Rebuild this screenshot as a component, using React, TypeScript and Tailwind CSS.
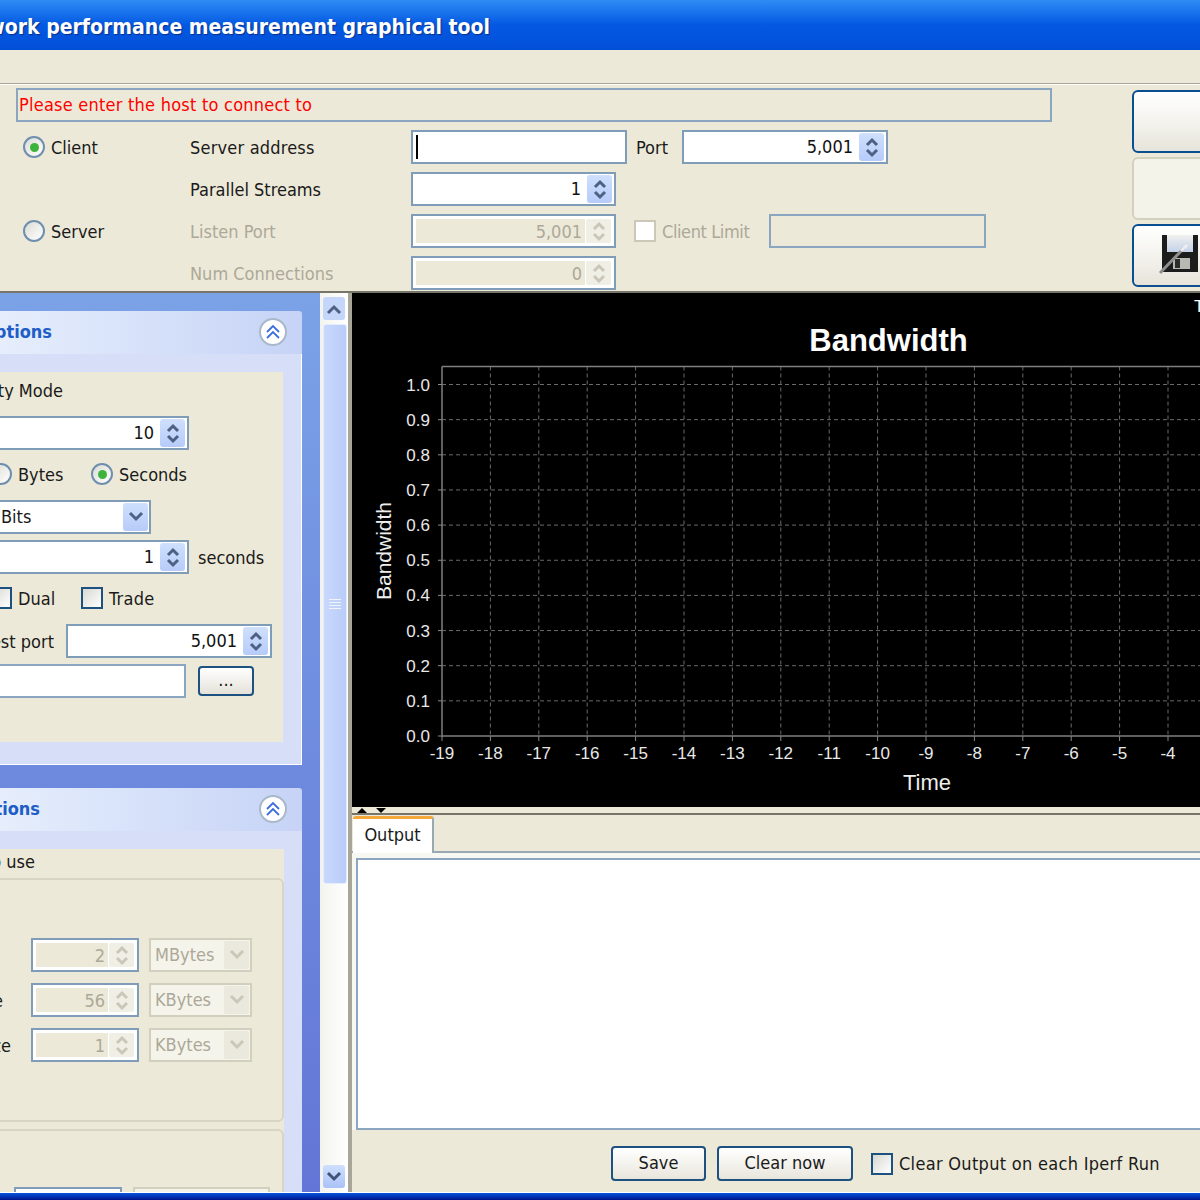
import type { ReactNode } from 'react';

const yLabels = ['1.0', '0.9', '0.8', '0.7', '0.6', '0.5', '0.4', '0.3', '0.2', '0.1', '0.0'];
const xLabels = [-19, -18, -17, -16, -15, -14, -13, -12, -11, -10, -9, -8, -7, -6, -5, -4, -3];

function Chevrons({ color }: { color: string }) {
  return (
    <svg width="14" height="24" viewBox="0 0 14 24" fill="none" stroke={color} strokeWidth="3">
      <polyline points="2,10 7,5 12,10" />
      <polyline points="2,15 7,20 12,15" />
    </svg>
  );
}

function ChevronDown({ color }: { color: string }) {
  return (
    <svg width="16" height="12" viewBox="0 0 16 12" fill="none" stroke={color} strokeWidth="3">
      <polyline points="2,2 8,8 14,2" />
    </svg>
  );
}

function Spinner({ value, className, disabled }: { value: string; className: string; disabled?: boolean }) {
  if (disabled) {
    return (
      <div className={`h-[34px] shrink-0 border-2 border-[#7f9db9] bg-white p-[3px] flex ${className}`}>
        <div className="flex-1 bg-[#ece9d8] text-[#aca899] text-right pr-[3px] leading-[26px]">{value}</div>
        <div className="w-[25px] ml-[1px] rounded-[2px] bg-[#f0efe6] flex items-center justify-center">
          <Chevrons color="#cac7b8" />
        </div>
      </div>
    );
  }
  return (
    <div className={`h-[34px] shrink-0 border-2 border-[#7f9db9] bg-white pl-[3px] pr-[2px] py-[1px] flex ${className}`}>
      <div className="flex-1 text-right pr-[6px] leading-[28px] text-[#111]">{value}</div>
      <div className="w-[25px] rounded-[3px] bg-gradient-to-b from-[#cfe0fd] to-[#b6cbf9] flex items-center justify-center">
        <Chevrons color="#4d6185" />
      </div>
    </div>
  );
}

function DisabledCombo({ value }: { value: string }) {
  return (
    <div className="ml-[10px] w-[103px] h-[34px] shrink-0 border-2 border-[#d2cfbe] bg-[#f5f4ea] pl-[4px] pr-[1px] py-[1px] flex">
      <div className="flex-1 text-[#aca899] leading-[28px]">{value}</div>
      <div className="w-[25px] rounded-[2px] bg-[#ebe9de] flex items-center justify-center">
        <ChevronDown color="#cac7b8" />
      </div>
    </div>
  );
}

function Radio({ checked }: { checked?: boolean }) {
  return (
    <div className="w-[22px] h-[22px] shrink-0 rounded-full border-2 border-[#6f8fae] bg-gradient-to-br from-[#dcdcd5] to-white flex items-center justify-center">
      {checked && <div className="w-[9px] h-[9px] rounded-full bg-[#3cb43c]" />}
    </div>
  );
}

function Checkbox({ disabled }: { disabled?: boolean }) {
  return disabled ? (
    <div className="w-[22px] h-[22px] shrink-0 border-2 border-[#cbc8b8] bg-white" />
  ) : (
    <div className="w-[22px] h-[22px] shrink-0 border-2 border-[#1c5180] bg-gradient-to-br from-[#d8d8d2] to-white" />
  );
}

// label cut off by the left edge of the window: right edge stays where the box ends
function ClippedLabel({ className, children }: { className: string; children: ReactNode }) {
  return <div className={`shrink-0 flex justify-end overflow-hidden whitespace-nowrap ${className}`}>{children}</div>;
}

function CollapseToggle() {
  return (
    <div className="w-[28px] h-[28px] rounded-full border-2 border-[#a9b8c9] bg-white flex items-center justify-center">
      <svg width="16" height="16" viewBox="0 0 16 16" fill="none" stroke="#3b6fe0" strokeWidth="1.8">
        <polyline points="2,8 8,2 14,8" />
        <polyline points="2,14 8,8 14,14" />
      </svg>
    </div>
  );
}

function SectionHeader({ title, width }: { title: string; width: string }) {
  return (
    <div className="h-[43px] rounded-tr-[3px] bg-gradient-to-r from-[#e6eefc] to-[#c6d3f6] flex items-center pr-[15px] pb-[2px]">
      <ClippedLabel className={`font-bold text-[#215dc6] ${width}`}>{title}</ClippedLabel>
      <div className="ml-auto">
        <CollapseToggle />
      </div>
    </div>
  );
}

function Scrollbar() {
  return (
    <div className="w-[32px] h-[899px] shrink-0 bg-gradient-to-r from-[#f3f3ee] to-white border-r-[4px] border-[#a8a698] pl-[3px] pr-[1px] pt-[4px] pb-[4px] flex flex-col">
      <div className="h-[23px] w-[22px] rounded-[3px] bg-[#c5d6fb] flex items-center justify-center">
        <svg width="16" height="12" viewBox="0 0 16 12" fill="none" stroke="#4d6185" strokeWidth="3">
          <polyline points="2,10 8,4 14,10" />
        </svg>
      </div>
      <div className="mt-[4px] h-[560px] w-[24px] rounded-[3px] border border-[#e4ecfd] bg-gradient-to-r from-[#c9d8fc] to-[#b9cdf9] flex flex-col items-center justify-center gap-[2px]">
        <div className="w-[12px] h-[1px] bg-[#eef3fe]" />
        <div className="w-[12px] h-[1px] bg-[#eef3fe]" />
        <div className="w-[12px] h-[1px] bg-[#eef3fe]" />
        <div className="w-[12px] h-[1px] bg-[#eef3fe]" />
      </div>
      <div className="mt-auto h-[23px] w-[22px] rounded-[3px] bg-gradient-to-b from-[#cfe0fd] to-[#aac2f7] flex items-center justify-center">
        <ChevronDown color="#3f5378" />
      </div>
    </div>
  );
}

function Chart() {
  const plotLeft = 442;
  const plotTop = 366.5;
  const yFor = (i: number) => 384.5 + i * 35.15;
  const xFor = (i: number) => plotLeft + i * 48.4;
  return (
    <svg className="block w-[848px] h-[514px] shrink-0 bg-black" viewBox="352 293 848 514" fontFamily="'Liberation Sans', Arial, sans-serif">
      <text x="888.5" y="351" fill="#fff" fontSize="31" fontWeight="700" textAnchor="middle">
        Bandwidth
      </text>
      <text x="1194" y="312" fill="#fff" fontSize="17">
        T
      </text>
      {yLabels.map((label, i) => (
        <g key={label}>
          {i < 10 && <line x1={plotLeft} x2="1200" y1={yFor(i)} y2={yFor(i)} stroke="#6a6a6a" strokeDasharray="4 3" />}
          <line x1={plotLeft - 4} x2={plotLeft} y1={yFor(i)} y2={yFor(i)} stroke="#8a8a8a" />
          <text x="430" y={yFor(i) + 6} fill="#e8e8e8" fontSize="17" textAnchor="end">
            {label}
          </text>
        </g>
      ))}
      {xLabels.map((label, i) => (
        <g key={label}>
          {i > 0 && <line x1={xFor(i)} x2={xFor(i)} y1={plotTop} y2="736" stroke="#6a6a6a" strokeDasharray="4 3" />}
          <line x1={xFor(i)} x2={xFor(i)} y1="736" y2="741" stroke="#8a8a8a" />
          <text x={xFor(i)} y="759" fill="#e8e8e8" fontSize="17" textAnchor="middle">
            {label}
          </text>
        </g>
      ))}
      <line x1={plotLeft} x2="1200" y1={plotTop} y2={plotTop} stroke="#7f7f7f" strokeWidth="1.5" />
      <line x1={plotLeft} x2={plotLeft} y1={plotTop} y2="737" stroke="#7f7f7f" strokeWidth="1.5" />
      <line x1={plotLeft} x2="1200" y1="736" y2="736" stroke="#7f7f7f" strokeWidth="1.5" />
      <text x="927" y="790" fill="#eee" fontSize="22" textAnchor="middle">
        Time
      </text>
      <text transform="translate(391 551) rotate(-90)" fill="#eee" fontSize="21" textAnchor="middle">
        Bandwidth
      </text>
    </svg>
  );
}

function FloppyIcon() {
  return (
    <svg width="40" height="40" viewBox="0 0 40 40" className="block">
      <defs>
        <linearGradient id="floppyLabel" x1="0" y1="0" x2="0" y2="1">
          <stop offset="0" stopColor="#f0f0ee" />
          <stop offset="1" stopColor="#c4d2ea" />
        </linearGradient>
      </defs>
      <path d="M4 0h36v37H4z" fill="#1c1c1c" />
      <rect x="9" y="0" width="26" height="17" fill="url(#floppyLabel)" />
      <rect x="15" y="23" width="17" height="11" fill="#b9b9b4" />
      <rect x="17" y="24" width="5" height="9" fill="#2c2c2c" />
      <line x1="2" y1="38" x2="26" y2="13" stroke="#8f8f8f" strokeWidth="3" />
      <line x1="23" y1="16" x2="29" y2="10" stroke="#eeeeee" strokeWidth="3" />
    </svg>
  );
}

export default function App() {
  return (
    <div className="w-[1200px] h-[1200px] overflow-hidden flex flex-col bg-[#ece9d8] text-[18px] text-[#1a1a1a] font-['DejaVu_Sans','Noto_Sans',sans-serif] [font-stretch:condensed]">
      {/* title bar */}
      <div className="h-[50px] shrink-0 pt-[5px] bg-gradient-to-b from-[#2f8cf5] via-[#0458e2] to-[#0350d8] flex items-center">
        <ClippedLabel className="w-[490px] text-[21px] font-bold text-white leading-none [text-shadow:1px_1px_1px_#0b2f8a]">
          JPerf 2.0.2 - network performance measurement graphical tool
        </ClippedLabel>
      </div>
      <div className="h-[33px] shrink-0" />
      <div className="h-[2px] shrink-0 bg-[#aca899] border-b border-white" />

      {/* connection settings */}
      <div className="h-[208px] shrink-0 flex border-b-2 border-[#77756a]">
        <div className="w-[1132px] shrink-0 pt-[3px]">
          <div className="ml-[16px] w-[1036px] h-[34px] border-2 border-[#8ba6c1] pl-[1px] leading-[30px] tracking-[0.23px] text-[#ff0000]">
            Please enter the host to connect to
          </div>
          <div className="mt-[8px] ml-[23px] flex flex-col gap-[8px]">
            <div className="h-[34px] flex items-center">
              <div className="w-[167px] flex items-center gap-[6px]">
                <Radio checked />
                <span>Client</span>
              </div>
              <div className="w-[221px] tracking-[0.2px]">Server address</div>
              <div className="w-[216px] h-[34px] border-2 border-[#7f9db9] bg-white pl-[3px] flex items-center">
                <div className="w-[2px] h-[24px] bg-black" />
              </div>
              <div className="ml-[9px] w-[46px]">Port</div>
              <Spinner value="5,001" className="w-[206px]" />
            </div>
            <div className="h-[34px] flex items-center">
              <div className="w-[167px]" />
              <div className="w-[221px]">Parallel Streams</div>
              <Spinner value="1" className="w-[205px]" />
            </div>
            <div className="h-[34px] flex items-center">
              <div className="w-[167px] flex items-center gap-[6px]">
                <Radio />
                <span>Server</span>
              </div>
              <div className="w-[221px] text-[#aca899]">Listen Port</div>
              <Spinner value="5,001" className="w-[205px]" disabled />
              <div className="ml-[18px]">
                <Checkbox disabled />
              </div>
              <div className="ml-[6px] w-[107px] text-[#aca899] tracking-[-0.4px]">Client Limit</div>
              <div className="w-[217px] h-[34px] border-2 border-[#8ba6c1]" />
            </div>
            <div className="h-[34px] flex items-center">
              <div className="w-[167px]" />
              <div className="w-[221px] text-[#aca899]">Num Connections</div>
              <Spinner value="0" className="w-[205px]" disabled />
            </div>
          </div>
        </div>
        <div className="flex-1 pt-[5px] flex flex-col gap-[4px] overflow-hidden">
          <div className="w-[90px] h-[63px] rounded-l-[6px] border-2 border-[#0a4f92] bg-gradient-to-b from-white via-[#f4f3ee] to-[#e6e4da]" />
          <div className="w-[90px] h-[63px] rounded-l-[6px] border-2 border-[#d3d0bf] bg-[#f4f3ea]" />
          <div className="w-[90px] h-[63px] rounded-l-[6px] border-2 border-[#0a4f92] bg-gradient-to-b from-white via-[#f4f3ee] to-[#e6e4da] pl-[24px] pt-[9px]">
            <FloppyIcon />
          </div>
        </div>
      </div>

      {/* main area */}
      <div className="h-[899px] shrink-0 flex overflow-hidden">
        <div className="w-[320px] shrink-0 bg-gradient-to-b from-[#7ba2e7] to-[#6375d6] pt-[18px] pr-[18px] overflow-hidden">
          <div>
            <SectionHeader title="Application layer options" width="w-[52px]" />
            <div className="h-[411px] bg-[#d6dff7] border-r border-b border-white pt-[18px] pr-[18px]">
              <div className="h-[370px] bg-[#ece9d8] pt-[9px]">
                <ClippedLabel className="w-[63px] h-[19px] leading-[19px]">Compatibility Mode</ClippedLabel>
                <div className="mt-[16px] h-[34px] flex">
                  <Spinner value="10" className="-ml-[4px] w-[193px]" />
                </div>
                <div className="mt-[7px] h-[34px] flex items-center">
                  <div className="-ml-[10px]">
                    <Radio />
                  </div>
                  <div className="ml-[6px] w-[73px]">Bytes</div>
                  <Radio checked />
                  <div className="ml-[6px]">Seconds</div>
                </div>
                <div className="mt-[9px] h-[34px] flex">
                  <div className="-ml-[4px] w-[155px] h-[34px] border-2 border-[#7f9db9] bg-white pl-[3px] pr-[1px] py-[1px] flex">
                    <div className="flex-1 leading-[28px]">Bits</div>
                    <div className="w-[25px] rounded-[3px] bg-gradient-to-b from-[#cfe0fd] to-[#b6cbf9] flex items-center justify-center">
                      <ChevronDown color="#4d6185" />
                    </div>
                  </div>
                </div>
                <div className="mt-[6px] h-[34px] flex items-center">
                  <Spinner value="1" className="-ml-[4px] w-[193px]" />
                  <div className="ml-[9px]">seconds</div>
                </div>
                <div className="mt-[7px] h-[34px] flex items-center">
                  <div className="-ml-[10px]">
                    <Checkbox />
                  </div>
                  <div className="ml-[6px] w-[63px]">Dual</div>
                  <Checkbox />
                  <div className="ml-[6px] tracking-[0.3px]">Trade</div>
                </div>
                <div className="mt-[9px] h-[34px] flex items-center">
                  <ClippedLabel className="w-[54px]">Test port</ClippedLabel>
                  <Spinner value="5,001" className="ml-[12px] w-[206px]" />
                </div>
                <div className="mt-[6px] h-[34px] flex items-center">
                  <div className="-ml-[4px] w-[190px] h-[34px] border-2 border-[#8ba6c1] bg-white" />
                  <div className="ml-[12px] w-[56px] h-[30px] rounded-[4px] border-2 border-[#1c5180] bg-gradient-to-b from-white to-[#e4e2d8] text-center leading-[24px]">
                    ...
                  </div>
                </div>
              </div>
            </div>
          </div>
          <div className="mt-[23px]">
            <SectionHeader title="Transport layer options" width="w-[40px]" />
            <div className="h-[400px] bg-[#d6dff7] pt-[18px] pr-[18px]">
              <div className="h-[400px] bg-[#ece9d8] pt-[3px]">
                <ClippedLabel className="w-[35px] h-[20px] leading-[20px]">to use</ClippedLabel>
                <div className="mt-[6px] -ml-[6px] h-[244px] border-2 border-[#d8d5c4] rounded-[6px] pt-[58px] pl-[4px] flex flex-col gap-[11px]">
                  <div className="flex items-center">
                    <Spinner value="2" className="ml-[31px] w-[108px]" disabled />
                    <DisabledCombo value="MBytes" />
                  </div>
                  <div className="flex items-center">
                    <ClippedLabel className="w-[3px]">Buffer Size</ClippedLabel>
                    <Spinner value="56" className="ml-[28px] w-[108px]" disabled />
                    <DisabledCombo value="KBytes" />
                  </div>
                  <div className="flex items-center">
                    <ClippedLabel className="w-[11px]">Segment Size</ClippedLabel>
                    <Spinner value="1" className="ml-[20px] w-[108px]" disabled />
                    <DisabledCombo value="KBytes" />
                  </div>
                </div>
                <div className="mt-[7px] -ml-[6px] h-[120px] border-2 border-[#d8d5c4] rounded-[6px] pt-[56px] pl-[18px] flex gap-[11px]">
                  <div className="w-[108px] h-[34px] border-2 border-[#7f9db9] bg-white" />
                  <div className="w-[137px] h-[34px] border-2 border-[#d2cfbe] bg-[#f5f4ea]" />
                </div>
              </div>
            </div>
          </div>
        </div>

        <Scrollbar />

        <div className="flex-1 min-w-0 flex flex-col">
          <Chart />
          {/* split pane divider */}
          <div className="h-[8px] shrink-0 border-b-2 border-[#77756a] pl-[5px] flex items-center gap-[9px]">
            <div className="w-0 h-0 border-x-[5px] border-x-transparent border-b-[5px] border-b-black" />
            <div className="w-0 h-0 border-x-[5px] border-x-transparent border-t-[5px] border-t-black" />
          </div>
          <div className="h-[38px] shrink-0 flex border-b-2 border-[#9aa8b4]">
            <div className="ml-[1px] w-[81px] mt-[1px] h-[38px] rounded-t-[3px] border-t-[3px] border-[#f7a83b] border-r-2 border-r-[#9aa8b4] bg-white text-center leading-[31px]">
              Output
            </div>
          </div>
          <div className="h-[277px] shrink-0 bg-[#f8f8f2] pl-[4px] pt-[5px]">
            <div className="h-[272px] border-t-2 border-l-2 border-b-2 border-[#8ba6c1] bg-white" />
          </div>
          <div className="flex-1 pl-[259px] pt-[16px] flex items-start">
            <div className="w-[95px] h-[35px] rounded-[4px] border-2 border-[#1c5180] bg-gradient-to-b from-white to-[#e8e6dc] text-center leading-[30px]">
              Save
            </div>
            <div className="ml-[11px] w-[136px] h-[35px] rounded-[4px] border-2 border-[#1c5180] bg-gradient-to-b from-white to-[#e8e6dc] text-center leading-[30px]">
              Clear now
            </div>
            <div className="ml-[18px] h-[35px] flex items-center gap-[6px] whitespace-nowrap">
              <Checkbox />
              <span className="tracking-[0.3px]">Clear Output on each Iperf Run</span>
            </div>
          </div>
        </div>
      </div>

      {/* window frame, bottom edge */}
      <div className="h-[1px] shrink-0 bg-white" />
      <div className="flex-1 bg-gradient-to-b from-[#0a55e0] to-[#00128c]" />
    </div>
  );
}
